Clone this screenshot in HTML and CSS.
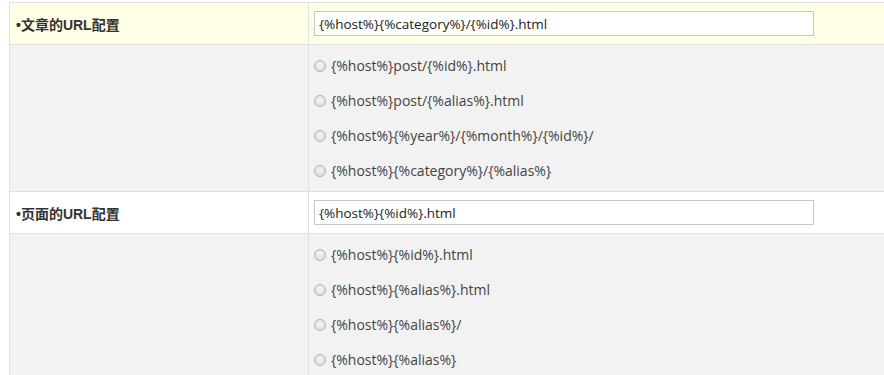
FILE: index.html
```html
<!DOCTYPE html>
<html lang="zh-CN">
<head>
    <meta charset="UTF-8">
    <title>URL配置</title>
    <link rel="stylesheet" href="styles.css">
</head>
<body>
    <table class="tableBorder">
        <colgroup>
            <col class="col-name">
            <col class="col-value">
        </colgroup>
        <tr class="row-head">
            <td class="name"><b>•文章的URL配置</b></td>
            <td class="value"><input type="text" class="url-input" value="{%host%}{%category%}/{%id%}.html"></td>
        </tr>
        <tr class="row-opts">
            <td></td>
            <td class="opts">
                <label class="opt"><input type="radio" name="post_url"> {%host%}post/{%id%}.html</label>
                <label class="opt"><input type="radio" name="post_url"> {%host%}post/{%alias%}.html</label>
                <label class="opt"><input type="radio" name="post_url"> {%host%}{%year%}/{%month%}/{%id%}/</label>
                <label class="opt"><input type="radio" name="post_url"> {%host%}{%category%}/{%alias%}</label>
            </td>
        </tr>
        <tr class="row-head row-white">
            <td class="name"><b>•页面的URL配置</b></td>
            <td class="value"><input type="text" class="url-input" value="{%host%}{%id%}.html"></td>
        </tr>
        <tr class="row-opts">
            <td></td>
            <td class="opts">
                <label class="opt"><input type="radio" name="page_url"> {%host%}{%id%}.html</label>
                <label class="opt"><input type="radio" name="page_url"> {%host%}{%alias%}.html</label>
                <label class="opt"><input type="radio" name="page_url"> {%host%}{%alias%}/</label>
                <label class="opt"><input type="radio" name="page_url"> {%host%}{%alias%}</label>
            </td>
        </tr>
    </table>
</body>
</html>
```

FILE: styles.css
```css
html, body {
    margin: 0;
    padding: 0;
    background: #fff;
    overflow: hidden;
}

body {
    font-family: "Open Sans", "Noto Sans CJK SC", sans-serif;
    font-size: 13px;
    color: #333;
}

.tableBorder {
    margin: 2px 0 0 9px;
    width: calc(100% - 8px);
    table-layout: fixed;
    border-collapse: collapse;
    border: 1px solid #e0e0e0;
}

.col-name {
    width: 299px;
}

.tableBorder td {
    border: 1px solid #e0e0e0;
    padding: 0 5px;
    vertical-align: middle;
}

.row-head {
    height: 42px;
    background: #ffffe6;
}

.row-head.row-white {
    background: #fff;
}

.row-opts {
    background: #f2f2f2;
}

.name b {
    font-family: "Liberation Sans", "Noto Sans CJK SC", sans-serif;
    font-size: 14px;
    font-weight: bold;
    color: #333;
    padding-left: 1px;
}

.url-input {
    display: block;
    box-sizing: border-box;
    width: 500px;
    height: 25px;
    margin: 0;
    padding: 0 4px;
    border: 1px solid #c8c8c8;
    background: #fff;
    font-family: "Open Sans", sans-serif;
    font-size: 13.5px;
    color: #222;
    outline: none;
}

.tableBorder td.opts {
    padding: 3px 5px;
}

.opt {
    display: flex;
    align-items: center;
    height: 35px;
    font-size: 14px;
    color: #444;
}

.opt input {
    appearance: none;
    -webkit-appearance: none;
    width: 12px;
    height: 12px;
    margin: 0 5px 0 0;
    border: 1px solid #b5b5b5;
    border-radius: 50%;
    background: radial-gradient(circle at 50% 40%, #f6f6f6 0%, #dedede 70%, #cfcfcf 100%);
    box-sizing: border-box;
}
```
